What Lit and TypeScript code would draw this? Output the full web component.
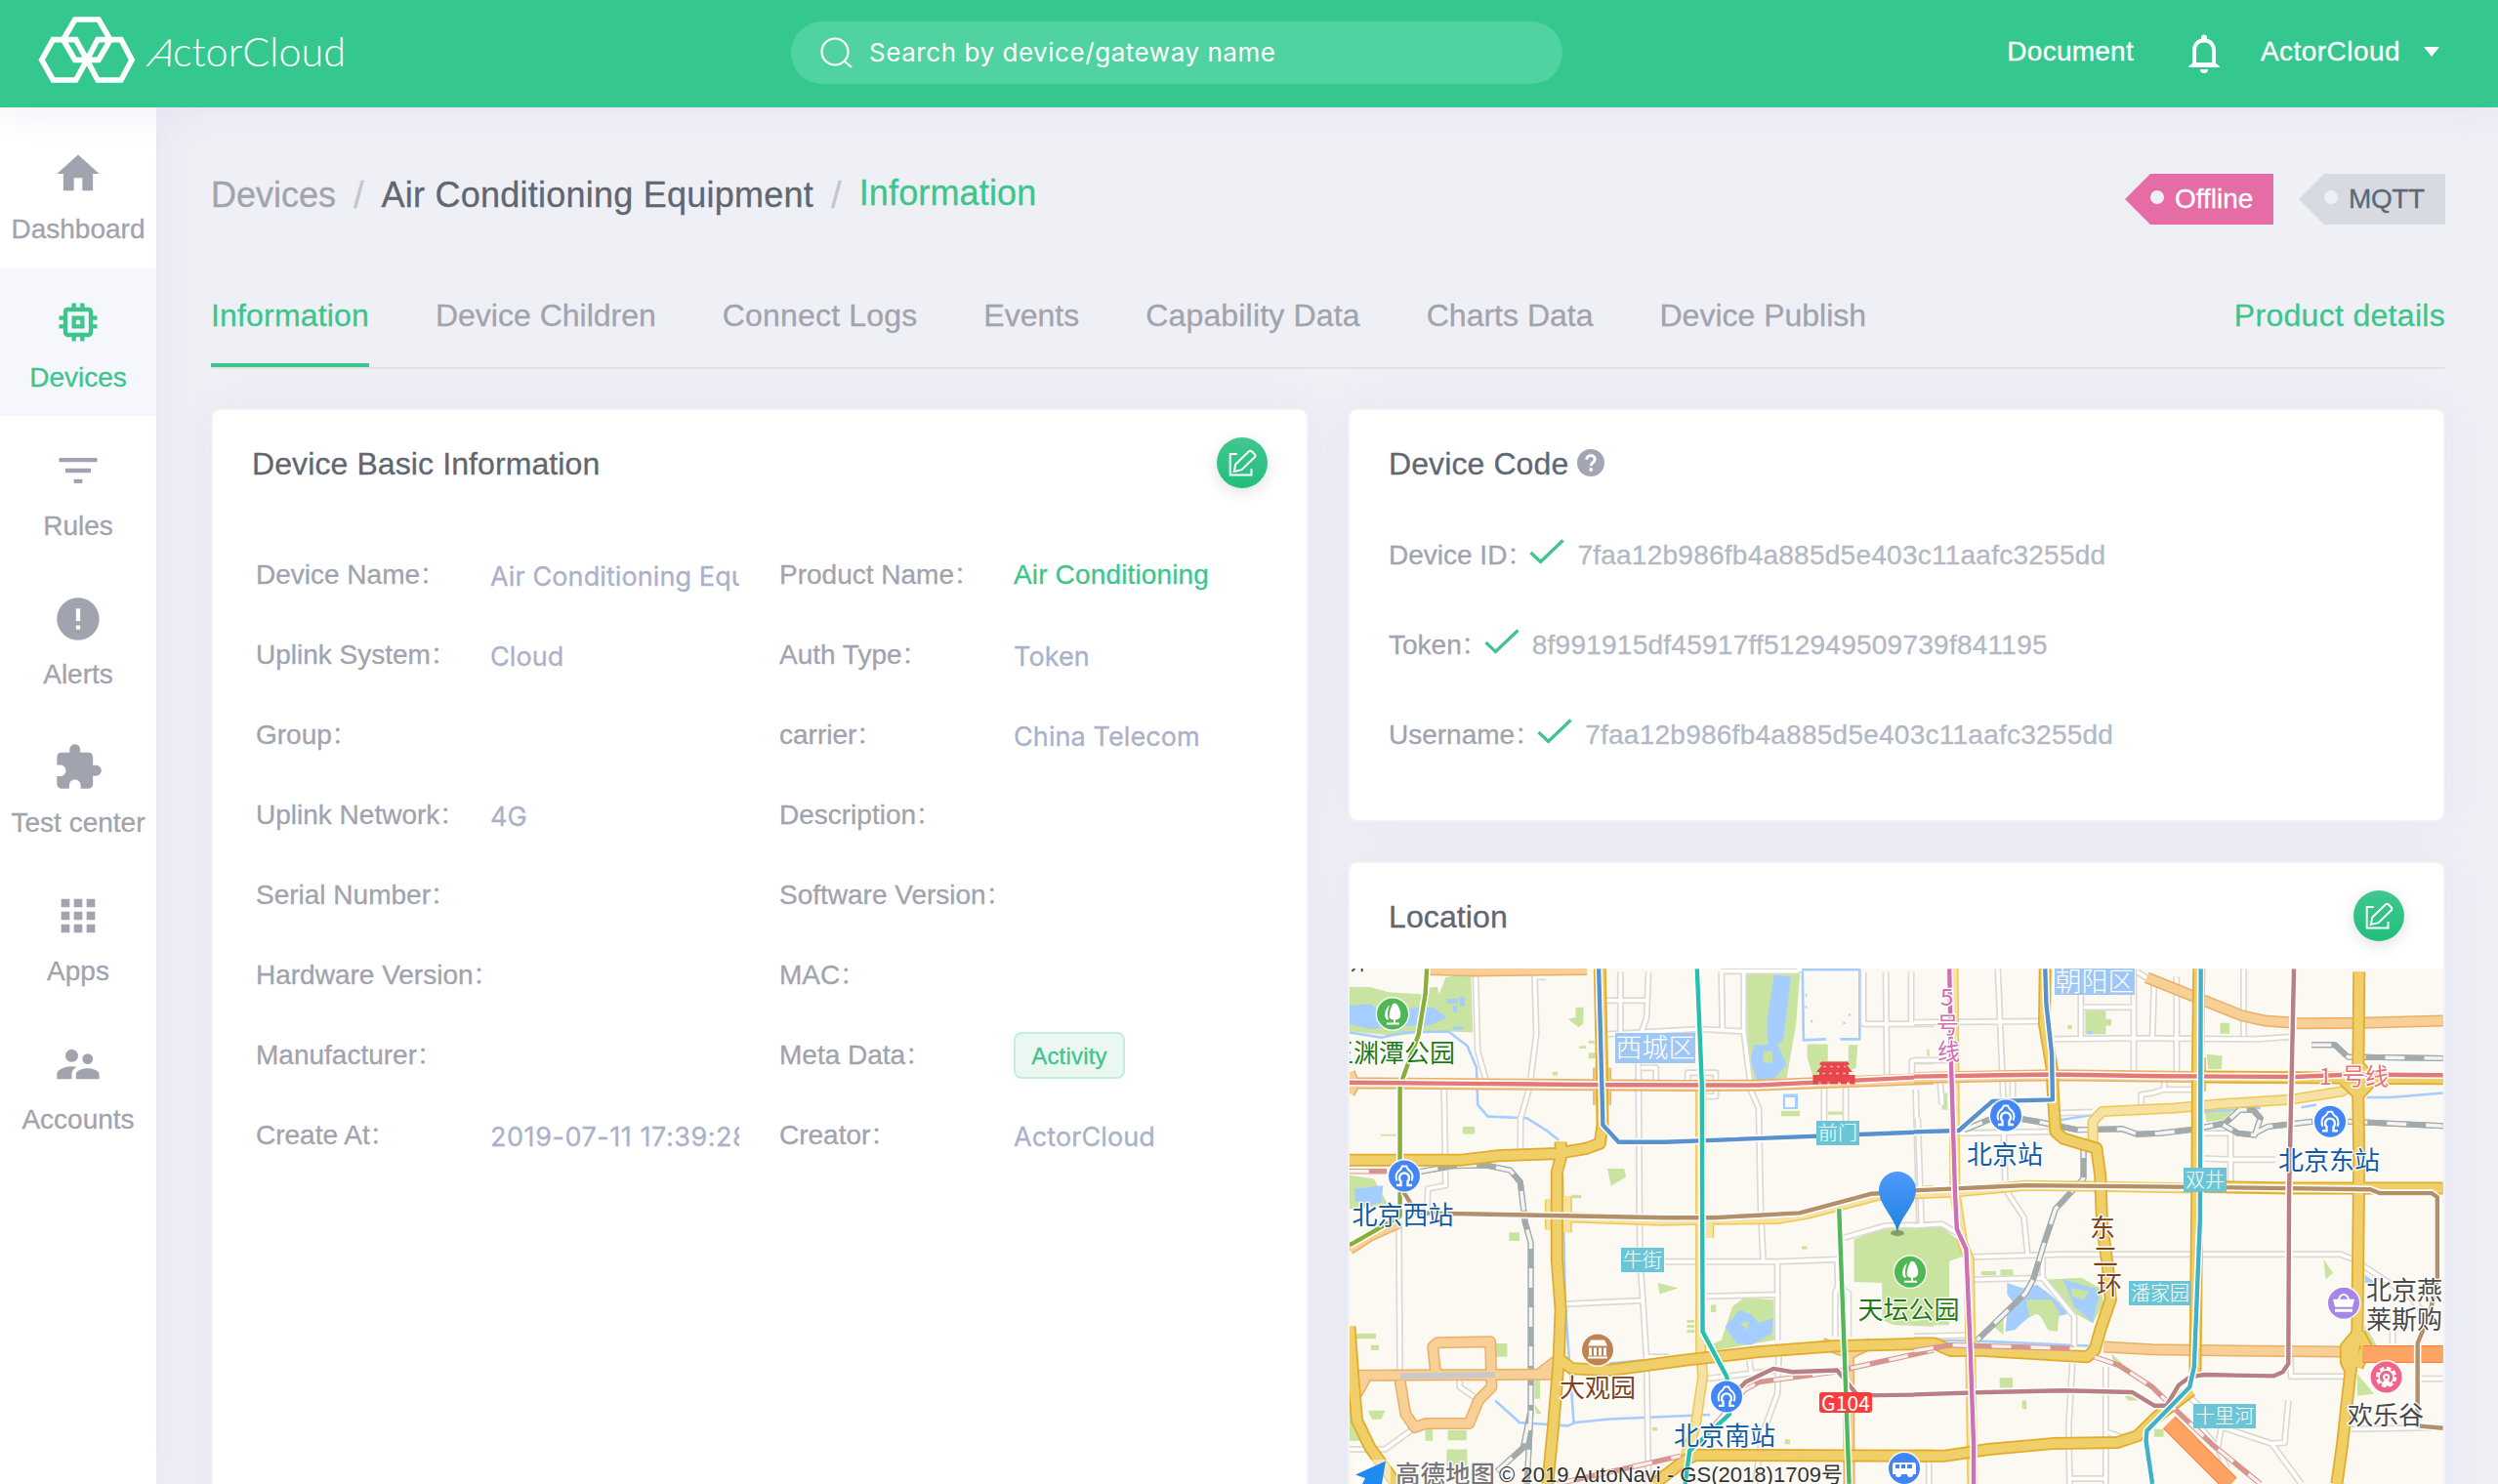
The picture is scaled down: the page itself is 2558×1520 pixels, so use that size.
import { LitElement, html, svg, css } from "lit";
import { customElement, property } from "lit/decorators.js";
import { classMap } from "lit/directives/class-map.js";

const ICONS: Record<string, unknown> = {
  home: svg`<path d="M10 20v-6h4v6h5v-8h3L12 3 2 12h3v8z"/>`,
  chip: svg`<path d="M15 9H9v6h6V9zm-2 4h-2v-2h2v2zm8-2V9h-2V7c0-1.1-.9-2-2-2h-2V3h-2v2h-2V3H9v2H7c-1.1 0-2 .9-2 2v2H3v2h2v2H3v2h2v2c0 1.1.9 2 2 2h2v2h2v-2h2v2h2v-2h2c1.1 0 2-.9 2-2v-2h2v-2h-2v-2h2zm-4 6H7V7h10v10z"/>`,
  filter: svg`<path d="M10 18h4v-2h-4v2zM3 6v2h18V6H3zm3 7h12v-2H6v2z"/>`,
  alert: svg`<path d="M12 2C6.48 2 2 6.48 2 12s4.48 10 10 10 10-4.48 10-10S17.52 2 12 2zm1 15h-2v-2h2v2zm0-4h-2V7h2v6z"/>`,
  puzzle: svg`<path d="M20.5 11H19V7c0-1.1-.9-2-2-2h-4V3.5a2.5 2.5 0 0 0-5 0V5H4c-1.1 0-1.99.9-1.99 2v3.8H3.5c1.49 0 2.7 1.21 2.7 2.7s-1.21 2.7-2.7 2.7H2V20c0 1.1.9 2 2 2h3.8v-1.5c0-1.49 1.21-2.7 2.7-2.7s2.7 1.21 2.7 2.7V22H17c1.1 0 2-.9 2-2v-4h1.5a2.5 2.5 0 0 0 0-5z"/>`,
  grid: svg`<path d="M4 8h4V4H4v4zm6 12h4v-4h-4v4zm-6 0h4v-4H4v4zm0-6h4v-4H4v4zm6 0h4v-4h-4v4zm6-10v4h4V4h-4zm-6 4h4V4h-4v4zm6 6h4v-4h-4v4zm0 6h4v-4h-4v4z"/>`,
  people: svg`<path d="M16.5 12a2.5 2.5 0 1 0 0-5 2.5 2.5 0 0 0 0 5zM9 11a3 3 0 1 0 0-6 3 3 0 0 0 0 6zm7.5 3c-1.83 0-5.5.92-5.500 2.750V19h11v-2.250c0-1.830-3.670-2.750-5.500-2.750zM9 13c-2.330 0-7 1.170-7 3.500V19h7v-2.250c0-.85.330-2.340 2.370-3.470C10.500 13.100 9.660 13 9 13z"/>`,
};

const NAV = [
  ["home", "Dashboard"],
  ["chip", "Devices"],
  ["filter", "Rules"],
  ["alert", "Alerts"],
  ["puzzle", "Test center"],
  ["grid", "Apps"],
  ["people", "Accounts"],
];

const TABS = ["Information", "Device Children", "Connect Logs", "Events", "Capability Data", "Charts Data", "Device Publish"];
const WIDE_TABS = new Set(["Information", "Connect Logs", "Capability Data"]);

type Field = { label: string; value?: string; kind?: "link" | "tag" | "date" };

const FIELDS: Field[] = [
  { label: "Device Name", value: "Air Conditioning Equipment" },
  { label: "Product Name", value: "Air Conditioning", kind: "link" },
  { label: "Uplink System", value: "Cloud" },
  { label: "Auth Type", value: "Token" },
  { label: "Group" },
  { label: "carrier", value: "China Telecom" },
  { label: "Uplink Network", value: "4G" },
  { label: "Description" },
  { label: "Serial Number" },
  { label: "Software Version" },
  { label: "Hardware Version" },
  { label: "MAC" },
  { label: "Manufacturer" },
  { label: "Meta Data", value: "Activity", kind: "tag" },
  { label: "Create At", value: "2019-07-11 17:39:28", kind: "date" },
  { label: "Creator", value: "ActorCloud" },
];

const CODES = [
  ["Device ID", "7faa12b986fb4a885d5e403c11aafc3255dd"],
  ["Token", "8f991915df45917ff512949509739f841195"],
  ["Username", "7faa12b986fb4a885d5e403c11aafc3255dd"],
];

/* ---------- map data: two survey tiles, west and east ---------- */

type Tile = {
  matrix: string;
  green: string;
  water: string;
  island: string;
  river: string;
  minor: string;
  pale: string;
  orange: string;
  yellow: string;
  express: string;
  rail: string;
  redRail: string;
  metro: [string, string][];
};

const WEST: Tile = {
  matrix: "matrix(.3827 0 0 .34435 -2 -12)",
  green:
    "M5 90H60L110 105 200 112 205 92 240 90 245 110 262 62 290 55 330 45 335 225 270 222 200 225 130 235 5 222ZM590 186 610 180V150H632L630 200 618 210ZM620 265h18v8h-18zM645 250h15v8h-15zM645 285h18v18h-18zM548 343h14v10h-14zM695 630H740L745 655 705 682ZM308 505h32v22h-32zM432 820h28v25h-28zM830 970 885 985 835 1003ZM5 650 70 660 90 700 110 740 5 750ZM1068 50H1210L1200 200 1175 360 1085 368 1070 250ZM1230 260H1285V310H1340V262H1365L1360 330 1250 375 1230 300ZM1160 458h50v16h-50zM1285 460h40v10h-40zM1355 840 1450 803H1568V1100L1460 1095 1430 1080V970L1355 967ZM960 1160 1000 1140 1030 1040 1060 1015 1140 1020 1142 1140 1040 1160 975 1172ZM972 1035h14v22h-14zM908 1080h20v8h-20zM908 1095h20v8h-20zM908 1110h20v8h-20zM18 1120h58v16h-58zM62 1155h22v15h-22zM395 1150h32v40h-32zM500 1260h15v55h-15zM500 1330l20 30h-15zM265 1465h55v50h-55zM208 1405h20v35h-20zM268 1408h50v30h-50zM55 1350h45l-10 26h-25zM88 528h42v5h-42zM815 1400h14v10h-14zM1170 1435h14v15h-14zM5 1310 20 1400 40 1440 5 1440ZM1215 860h14v10h-14zM600 708h25v10h-25z",
  water:
    "M5 145 60 140 90 165 190 150H230L265 180 220 205H160L60 215 5 200ZM265 125h30v14h-30zM300 118h14v30h-14zM282 145h10v20h-10zM282 208h26v8h-26zM18 690 95 680 90 730 50 742 20 725ZM1142 52 1186 60 1165 250 1150 262 1175 320 1140 365H1095L1078 310 1088 262 1125 262 1122 190ZM1165 408h40v45h-40zM1010 1100 1050 1050 1080 1065 1100 1090 1138 1075 1135 1120 1080 1155 1040 1150ZM1225 110h4v8h-4zM1225 145h4v8h-4zM1240 188h4v8h-4zM1340 170h6v6h-6zM1325 195h8v5h-8z",
  island: "M1112 280h25v35h-25zM1050 1090 1075 1085 1070 1110Z",
  river:
    "M5 225 90 240 150 225 270 222 320 265 345 330 348 440 375 475 480 480 530 515 565 545M1280 245 1220 248 1217 38H1370V245H1318M455 1385 590 1395 610 1385 700 1375 970 1362M575 650 582 1030 605 1385M395 1320 460 1385M700 1210 790 1200",
  minor:
    "M342 45 348 280 370 365M500 45 505 230 490 360M485 395 463 480 462 575M258 390 262 680 215 690 212 760M137 790 140 1230M690 130H800M730 45V230M805 45 800 180 785 230 778 300 782 900 790 1020 800 1200 805 1568M695 230 945 215 1060 222M1000 45 1003 215M1060 222V45M1060 222 1080 400 1100 450 1105 740 1112 905M1000 43H1200L1215 36M785 330H825V370M910 365V345H985V415H960M1380 45V200H1568M1440 45 1443 350M1508 45V200M1510 360V310H1568M1275 390V490M1333 390V490M1520 395 1530 800M1330 835 1440 800 1568 797M580 1033 790 1022M850 907H1150L1310 900M960 1010 1150 1005M1150 908V1140M1310 900 1312 980 1305 1000V1130M1312 980 1340 1000V1130M1155 1150 1150 1300 1110 1420 1090 1568M800 1190H860M960 1255 1150 1230M1075 1200 1080 1240M5 1465H100L180 1400M300 1260V1280L340 1310M500 60H530",
  pale: "M590 775 840 785 945 782 1150 780 1230 765 1420 710 1568 695M945 390V1170L950 1250 930 1400 900 1500M966 790V835M542 722V812M586 712V820",
  orange:
    "M5 375 500 380 900 383 1100 382 1568 362M672 330V440M690 330V440M215 38 345 42 640 38M25 1245 560 1242M235 1235 228 1160 240 1148 382 1145 385 1280 350 1320 325 1388 210 1388 180 1400 155 1360 140 1260M25 1300 50 1250M1340 1140 1342 1568M5 870 60 830 140 790M1270 1150 1345 1180 1400 1150M510 1242 560 1200M5 345 15 370M5 405 15 385",
  yellow:
    "M5 605H300L400 592 560 585 640 570 675 555 682 500 680 300 675 36M570 550V600L560 640V900L570 1050 565 1200 550 1400 535 1568M565 1195 600 1225 700 1230 900 1200 1100 1175 1300 1158 1568 1150M5 1100 15 1250 25 1380 60 1460 130 1568M820 1568 900 1500 930 1482 1568 1485",
  express: "",
  rail: "M190 640 280 622 370 620 435 635 462 670 475 790 490 850V1350L470 1460 400 1530M490 1350 480 1568",
  redRail: "M5 638H105M910 1480 1000 1370 1060 1290 1100 1265 1300 1235 1568 1170M560 1568 890 1485",
  metro: [
    ["#8aae38", "M212 36 208 110 190 230 140 385V772L5 858"],
    ["#e27a7c", "M5 374 700 381 1100 382 1568 356"],
    ["#5891cd", "M672 36 683 500 725 551H850L1568 520"],
    ["#b38f6a", "M150 700 185 762 850 776H980L1210 762 1400 705 1568 695"],
    ["#b97f83", "M1015 1320 1065 1265 1140 1225 1190 1235 1310 1230 1365 1305 1568 1302"],
    ["#27bfae", "M935 36 948 380 950 1115 1015 1250 1022 1360 915 1470 903 1568"],
    ["#50b859", "M1315 750 1330 1200 1342 1568"],
  ],
};

const EAST: Tile = {
  matrix: "matrix(.3814 0 0 .34435 578 -12)",
  green:
    "M460 160h55v25h15v20h-15v25h-55zM412 203h12v12h-12zM822 197h25v32h-25zM785 290 828 295 825 335 790 335ZM0 803H75L120 845 135 890 95 905V1095L0 1098ZM360 960 450 955 500 985 510 1030 480 1090 430 1060 370 990ZM215 1100 240 1075V1125ZM780 460 860 455 830 485 785 492ZM230 1252h35v30h-35zM645 1405h25v23h-25zM155 513H310V520H150ZM75 405h15v50h-15zM1100 900 1125 940 1105 960ZM1210 1095 1245 1160 1210 1150ZM1190 1240 1235 1300 1190 1305ZM530 1180 560 1210H535ZM232 930h34v18h-34zM180 935h40v12h-40zM565 1305h40v15h-30zM290 1320h12v25h-12zM35 275h6v20h-6z",
  water:
    "M250 970 290 985 330 975 360 1000 420 1060 350 1080 330 1060 305 1075 270 1110 245 1115 250 1060 275 1040 250 1005ZM400 960 500 990 480 1090 430 1040ZM1210 945 1240 970H1210ZM465 222h15v8h-15z",
  island: "M300 1020 370 1020 390 1060 385 1115 360 1110 335 1060 310 1070ZM420 985 470 995 455 1020 425 1010Z",
  river: "M1215 418H1280L1420 405M395 485 550 458M0 1140 150 1142 480 1158M1040 448 1080 440M780 460 930 450",
  minor:
    "M0 195 345 192M225 36 240 430M240 500 245 665M0 308H95M0 800 75 795 120 825M375 245 590 242 920 245 1010 238M448 36V240M455 150H590M590 36V340M645 60 640 240M705 60V360M885 36V235M610 440V410L640 405 670 395H750M672 360V395M390 465 480 462M125 525 370 520M780 600 850 603H970M850 525V670M780 525H855M10 480 20 800M250 700 295 775 305 885M150 893 400 885H1145L1180 900 1330 1010 1370 1060M155 960 345 955 430 1070V1160M345 890V955M0 1130 150 1125M425 1210 415 1400 418 1568M515 1220V1568M420 1552H515M520 1415 590 1440M1010 1160 1012 1248H1155M730 1300 800 1370 830 1400 960 1448 1040 1568M1005 1320 995 1445 960 1448M770 1400 815 1460 840 1520M825 1400 815 1460M1170 1405 1420 1400M1360 1255H1420M1285 1060V1150M1220 1095H1330M70 370 75 440M265 370V420M40 1500V1568M600 45 640 75",
  pale:
    "M480 560V490L505 460 700 450 830 437 1010 425 1150 400 1190 370M105 36 107 300 110 700 130 850 148 900 157 1568M0 705 110 700 300 680 500 683 750 688",
  orange:
    "M0 360 375 352 750 357M625 62 880 175 940 190 1040 198 1200 197 1420 190M510 1160 640 1168 860 1172 1145 1175M372 330V390M768 300V400",
  yellow:
    "M352 36 350 200 370 330 375 440 380 520 400 540 490 570 500 650 505 800 520 920 528 1020 500 1110 485 1170 465 1190 165 1170 100 1172 55 1150H0M0 1485H80L200 1465 370 1448 545 1445 600 1425 650 1370 745 1290M765 36 762 300 760 700 755 1240M1195 45 1192 400 1195 600 1190 1110 1170 1250 1150 1450 1135 1568M780 357 1420 362M780 684 1005 688 1420 688M1195 1115 1160 1160V1205L1175 1240M1195 1120 1215 1160 1190 1220M1192 320 1228 370 1192 412M1192 325 1158 372 1192 408",
  express: "M1205 1182H1420M685 1385 850 1568",
  rail: "M135 515 200 485 250 475 330 490 440 515 560 512 600 528 660 525 740 515 835 495 875 455H910L930 480 915 530 870 525 830 500M915 525 950 505 1070 490M1165 490 1420 503M1068 262H1130L1165 298 1420 302M455 540V660L380 750 350 850 320 960 300 1000 170 1140",
  redRail: "M0 1172 100 1155 430 1165M485 1190 550 1215 640 1280 700 1345 800 1450 930 1568",
  metro: [
    ["#e27a7c", "M0 356 370 350 660 355 1020 357 1180 350 1420 352"],
    ["#b38f6a", "M0 695 100 690 300 680 760 685 1225 692 1250 703H1390L1405 715V960L1385 1060 1352 1150V1395L1420 1402"],
    ["#5891cd", "M0 521 120 517 210 430 372 425 370 290 355 140 352 36"],
    ["#b97f83", "M0 1302 200 1295 400 1290 585 1295 645 1335H678L710 1275 740 1250 780 1243 965 1247 990 1235 1005 1210 1007 700 1012 450 1020 36"],
    ["#ce70b4", "M95 36 100 330 110 700 115 810 140 870 150 1130 160 1450V1568"],
    ["#42b0c8", "M770 36 768 780 752 1220 740 1280 625 1410 623 1440 640 1568"],
  ],
};

const GREEN = "#1f7a16";
const BLUE = "#0f5ba8";
const BROWN = "#7a431c";
const DARK = "#4a4a4a";

const LABELS: [number, number, string, string, number][] = [
  [-8, 1, "桥", DARK, 26],
  [-22, 96, "玉渊潭公园", GREEN, 26],
  [2.500, 262, "北京西站", BLUE, 26],
  [520.500, 359, "天坛公园", GREEN, 26],
  [215, 439, "大观园", BROWN, 26],
  [332, 488, "北京南站", BLUE, 26],
  [632, 200, "北京站", BLUE, 26],
  [951, 206, "北京东站", BLUE, 26],
  [1041, 339, "北京燕", DARK, 26],
  [1041, 369, "莱斯购物", DARK, 26],
  [1022, 467, "欢乐谷", DARK, 26],
  [758, 275, "东", BROWN, 26],
  [761, 304, "二", BROWN, 26],
  [765, 334, "环", BROWN, 26],
  [605, 38, "5", "#cf6fb0", 24],
  [601, 66, "号", "#cf6fb0", 23],
  [602, 93, "线", "#cf6fb0", 23],
  [993, 119, "1", "#e57373", 23],
  [1016, 119, "号线", "#e57373", 24],
];

const PLATES: [number, number, number, number, string, string, number][] = [
  [272, 66, 82, 31, "西城区", "#9fc7f3", 27],
  [722, -1, 82, 28, "朝阳区", "#9fc7f3", 27],
  [478, 156, 44, 25, "前门", "#6ac6d6", 20],
  [278, 286, 44, 25, "牛街", "#6ac6d6", 20],
  [854, 204, 44, 25, "双井", "#6ac6d6", 20],
  [798, 320, 64, 25, "潘家园", "#6ac6d6", 20],
  [864, 446, 64, 25, "十里河", "#6ac6d6", 20],
];

const GLYPHS: Record<string, [string, unknown]> = {
  tree: ["#4fb855", svg`<path fill="#fff" d="M2-11C5-11 7-6 8-2 9 3 7 6 3 6V9H7V11H-6V9H1V6C-3 6-4 3-3-1-2-6 0-11 2-11ZM-3-9C-7-6-9 0-7 5-6 6-4 6-4 6-6 1-5-4-3-9Z"/>`],
  station: ["#4286f5", svg`<path fill="none" stroke="#fff" stroke-width="2.400" d="M-8 9.500H-3.500V5.500A5 5 0 1 1 3.500 5.500V9.500H8"/><path fill="none" stroke="#fff" stroke-width="2" d="M-7.500 5A8.500 8.500 0 0 1-4-6.500L-2-10H2L4-6.500A8.500 8.500 0 0 1 7.500 5"/>`],
  museum: ["#c08452", svg`<path fill="#fff" d="M-7-10H7L10-4H-10ZM-9-2H-6V6H-9ZM-4-2H-1V6H-4ZM1-2H4V6H1ZM6-2H9V6H6ZM-10 7H10V9H-10Z"/>`],
  shop: ["#a687e8", svg`<path fill="none" stroke="#fff" stroke-width="2" d="M-5-2C-5-11 5-11 5-2"/><path fill="#fff" d="M-11-4H11L9 4H-9ZM-9 6H9V9H-9Z"/>`],
  wheel: ["#f0648c", svg`<circle r="9" fill="none" stroke="#fff" stroke-width="3.500" stroke-dasharray="4.500 2.570"/><circle r="7.500" fill="none" stroke="#fff" stroke-width="1.500"/><path fill="#fff" d="M-5 9-1 0H1L5 9Z"/><circle r="3.500" fill="#fff"/><circle r="1.500" fill="#f0648c"/>`],
  bus: ["#4286f5", svg`<path fill="#fff" d="M-10-6H10Q12-6 12-3V6H9A3 3 0 0 1 3 6H-3A3 3 0 0 1-9 6H-12V-3Q-12-6-10-6Z"/><path fill="#4286f5" d="M-9-4H-5V0H-9ZM-3-4H1V0H-3ZM3-4H8V0H3Z"/>`],
};

const PINS: [string, number, number][] = [
  ["tree", 44, 46.5],
  ["station", 56, 212.5],
  ["tree", 574, 310.7],
  ["museum", 254, 390.5],
  ["station", 386, 438.4],
  ["station", 672, 150.5],
  ["station", 1004, 156.7],
  ["shop", 1018, 342.7],
  ["wheel", 1061.6, 418.4],
  ["bus", 568, 512],
];

@customElement("city-map")
class CityMap extends LitElement {
  static styles = css`
    :host { display: block; width: 1120px; height: 528px; }
    svg { display: block; }
    .line path { fill: none; vector-effect: non-scaling-stroke; stroke-linejoin: round; }
    .line .park { fill: #c9e3a0; }
    .line .lake { fill: #a5cdff; }
    .cjk { font-family: "Noto Sans CJK SC", "Liberation Sans", sans-serif; }
    .halo { paint-order: stroke; stroke: #fff; stroke-width: 2.6px; stroke-linejoin: round; }
    .soft { paint-order: stroke; stroke: rgba(255, 255, 255, 0.6); stroke-width: 1.5px; }
    .latin { font-family: "Liberation Sans", "Noto Sans CJK SC", sans-serif; }
  `;

  private tile(t: Tile) {
    const road = (d: string, casing: string, cw: number, fill: string, fw: number) => svg`
      <path d=${d} stroke=${casing} stroke-width=${cw}></path>
      <path d=${d} stroke=${fill} stroke-width=${fw}></path>`;
    return svg`<g class="line" transform=${t.matrix}>
      <path class="park" d=${t.green}></path><path class="lake" d=${t.water}></path><path class="park" d=${t.island}></path>
      <path d=${t.river} stroke="#a5cdff" stroke-width="2.600"></path>
      ${road(t.minor, "#ded9d0", 7, "#ffffff", 3.6)}
      ${road(t.rail, "#a3aaac", 6, "#a3aaac", 6)}
      <path d=${t.rail} stroke="#f4f4f2" stroke-width="3.600" stroke-dasharray="20 20"></path>
      ${road(t.pale, "#efc850", 11, "#f6e2a4", 8)}
      ${road(t.orange, "#e8b066", 12, "#f8cf96", 9)}
      ${road(t.yellow, "#e0ac2c", 13, "#f0cf68", 9.5)}
      ${t.express ? road(t.express, "#f78236", 18, "#fda364", 16) : ""}
      <path d=${t.redRail} stroke="#d79590" stroke-width="5.500"></path>
      <path d=${t.redRail} stroke="#faf0ec" stroke-width="3.400" stroke-dasharray="20 20"></path>
      ${t.metro.map(([c, d]) => road(d, "#ffffff", 7.5, c, 4.4))}
    </g>`;
  }

  render() {
    return html`<svg width="1120" height="528" viewBox="0 0 1120 528">
      <defs>
        <linearGradient id="drop" x1="0" y1="0" x2="0" y2="1">
          <stop offset="0" stop-color="#5098ff"></stop><stop offset="1" stop-color="#1e84dc"></stop>
        </linearGradient>
      </defs>
      <rect width="1120" height="528" fill="#fcf9f2"></rect>
      ${this.tile(WEST)} ${this.tile(EAST)}
      <rect x="446" y="132" width="10" height="10" fill="#fcf9f2"></rect>
      <path d="M52 417.500 149 416" stroke="#c9c9c9" stroke-width="6"></path>
      <path fill="#e8474b" d="M483 95.500H510L512 98 509.500 99.500 515 106H511V109H517.500V118.500H512V115.500H509V118.500H503V115.500H500V118.500H492V115.500H489V118.500H483V115.500H480V118.500H474.500V109H481V106H478L483.500 99.500 481 98Z"></path>
      <path d="M484 107.500H509M485 100.500H508" stroke="#fff" stroke-opacity=".55" stroke-width="1.300" stroke-dasharray="3 4"></path>
      ${PLATES.map(([x, y, w, h, t, c, s]) => svg`
        <rect x=${x} y=${y} width=${w} height=${h} fill=${c}></rect>
        <text class="cjk" x=${x + w / 2} y=${y + h / 2 + s * 0.37} font-size=${s} font-weight="300" text-anchor="middle" fill="#fff">${t}</text>`)}
      ${LABELS.map(([x, y, t, c, s]) => svg`<text class="cjk halo" x=${x} y=${y} font-size=${s} fill=${c}>${t}</text>`)}
      <rect x="481" y="434" width="54" height="21" rx="3" fill="#fa3c3c"></rect>
      <text class="cjk" x="508" y="452.500" font-size="21" text-anchor="middle" textLength="50" fill="#fff">G104</text>
      ${PINS.map(([k, x, y]) => svg`<g transform="translate(${x} ${y})">
        <circle r="17.500" fill="#fff" opacity=".85"></circle><circle r="16" fill=${GLYPHS[k][0]}></circle>${GLYPHS[k][1]}</g>`)}
      <ellipse cx="561" cy="271" rx="7" ry="3" fill="#7b8a5a" opacity=".8"></ellipse>
      <path fill="url(#drop)" d="M561 271C559 255 542 243 542 227A19 19 0 0 1 580 227C580 243 563 255 561 271Z"></path>
      <path fill="#fff" opacity=".5" d="M5 503H42V528H5Z"></path>
      <path fill="#1d8bf0" d="M37 504.500 6 518.500 16 522 13 528H33Z"></path>
      <text class="cjk halo" x="47" y="526.500" font-size="25.500" font-weight="500" fill="#777">高德地图</text>
      <text class="latin soft" x="153" y="525.500" font-size="22" textLength="352" lengthAdjust="spacingAndGlyphs" fill="#333">© 2019 AutoNavi - GS(2018)1709号</text>
    </svg>`;
  }
}

@customElement("edit-button")
class EditButton extends LitElement {
  static styles = css`
    :host {
      display: block; width: 52px; height: 52px; border-radius: 50%;
      background: linear-gradient(#40c78f, #22bf7b);
      box-shadow: 0 4px 16px rgba(0, 0, 0, 0.12);
    }
    svg { display: block; fill: none; stroke: #fff; stroke-width: 2; }
  `;
  render() {
    return html`<svg width="52" height="52" viewBox="0 0 52 52">
      <path d="M20.700 17H13.700V38.500H35.500V32"></path>
      <path d="M17.700 35 19.300 27.500 33 14.200Q34.300 13.200 35.600 14.200L39 17.500Q40 18.800 39 20L25.500 33.200Z"></path>
    </svg>`;
  }
}

@customElement("info-card")
class InfoCard extends LitElement {
  @property() heading = "";
  @property({ type: Boolean }) editable = false;
  @property({ type: Boolean }) help = false;
  static styles = css`
    :host {
      display: block; box-sizing: border-box; border: 2px solid #f1f2f8; border-radius: 10px;
      background: #fff; background-clip: padding-box; overflow: hidden;
      box-shadow: 0 0 40px rgba(205, 205, 232, 0.32);
    }
    .head { display: flex; align-items: center; height: 108px; padding: 0 40px; color: #606672; font-size: 32px; line-height: 40px; letter-spacing: 0.1px; }
    .head span { padding-top: 1px; }
    .spacer { flex: 1; }
    .help { margin-left: 9px; display: block; }
  `;
  render() {
    return html`<div class="head"><span>${this.heading}</span>
      ${this.help
        ? html`<svg class="help" width="28" height="28" viewBox="0 0 28 28"><circle cx="14" cy="14" r="14" fill="#a3a5b2"></circle>
            <path d="M9.800 10.800C9.800 5.200 18.200 5.400 18.200 10.400 18.200 13.600 14.200 13.600 14.200 17.200" fill="none" stroke="#fff" stroke-width="3"></path><circle cx="14.200" cy="21" r="1.900" fill="#fff"></circle></svg>`
        : ""}
      <span class="spacer"></span>${this.editable ? html`<edit-button></edit-button>` : ""}</div><slot></slot>`;
  }
}

@customElement("app-root")
class AppRoot extends LitElement {
  static styles = css`
    :host {
      display: flex; flex-direction: column; width: 2558px; height: 1520px; overflow: hidden;
      background: #eff0f6; color: #a1a3ae;
      font-family: "Liberation Sans", Arial, "Noto Sans CJK SC", sans-serif; font-size: 28px;
      -webkit-text-stroke: 0.3px;
    }
    .top { flex: none; display: grid; grid-template-columns: 771px 790px 1fr; align-items: center; height: 110px; padding: 0 60px 0 39px; box-sizing: border-box; background: #34c88f; color: #fff; box-shadow: 0 0 40px rgba(205, 205, 232, 0.42); z-index: 2; }
    .brand { display: block; -webkit-text-stroke: 0; }
    .brand text { font-family: Lato, "Open Sans", sans-serif; font-weight: 300; }
    .search { display: flex; align-items: center; gap: 15px; height: 64px; margin-bottom: 2px; padding-left: 29px; box-sizing: border-box; border-radius: 32px; background: #51d2a1; }
    .search span { font-family: Inter, sans-serif; font-size: 26px; letter-spacing: 0.55px; line-height: 66px; -webkit-text-stroke: 0; }
    .account { display: flex; align-items: center; justify-content: flex-end; line-height: 64px; padding-bottom: 5px; }
    .doc { letter-spacing: 0.25px; }
    .user { letter-spacing: 0.45px; }
    .bell { margin: 4px 42px 0 56px; }
    .caret { margin: 0 0 0 24px; border: solid transparent; border-width: 10px 8.5px 0; border-top-color: #fff; }
    .body { flex: 1; display: flex; min-height: 0; }
    .side { flex: none; width: 160px; padding-top: 12px; box-sizing: border-box; background: #fff; box-shadow: 0 0 40px rgba(205, 205, 232, 0.36); }
    .item { display: flex; flex-direction: column; align-items: center; height: 152px; padding-top: 30px; box-sizing: border-box; fill: #a1a3ae; white-space: nowrap; }
    .item svg { width: 52px; height: 52px; }
    .item span { margin-top: 15px; line-height: 32px; }
    .item.on { background: #f5f7fc; color: #3ec58b; fill: #3ec58b; }
    .main { flex: 1; display: flex; flex-direction: column; min-width: 0; padding: 60px 54px 0 56px; }
    .crumbs { flex: none; display: flex; align-items: center; height: 60px; font-size: 36px; line-height: 60px; }
    .sep { margin: 0 18px 0 18px; color: #c1c6d0; font-size: 38px; }
    .device { color: #606672; letter-spacing: 0.24px; }
    .here { color: #3ec58b; margin-top: -4px; letter-spacing: 0.15px; }
    .badges { display: flex; gap: 26px; margin: 8px 0 0 auto; }
    .badge { display: flex; align-items: center; width: 152px; height: 52px; padding-left: 26px; box-sizing: border-box; font-size: 28px; line-height: 52px; color: #fff; background: #e66ca5; clip-path: polygon(0 50%, 26px 0, 100% 0, 100% 100%, 26px 100%); }
    .badge i { width: 14px; height: 14px; margin: -4px 11px 0 0; border-radius: 50%; background: #eff0f6; }
    .badge.grey { width: 150px; background: #d7dae1; color: #606672; }
    .badge.grey span { letter-spacing: -0.4px; }
    .tabs { flex: none; display: flex; gap: 68px; margin: 40px 0; border-bottom: 2px solid #e0e2e8; font-size: 32px; line-height: 106px; }
    .tab.wide { letter-spacing: 0.17px; }
    .tab.on { color: #3ec58b; box-shadow: inset 0 -4px #3ec58b; }
    .product { margin-left: auto; color: #3ec58b; letter-spacing: 0.3px; }
    .cards { display: grid; grid-template-columns: 1124px 1124px; gap: 40px; align-items: start; }
    .basic { height: 1300px; }
    .stack { display: flex; flex-direction: column; gap: 40px; }
    .code { height: 424px; }
    .place { height: 800px; }
    .fields { display: grid; grid-template-columns: 240px 255px 281px 1fr; grid-auto-rows: 82px; align-items: center; padding: 20px 0 0 44px; }
    .label { line-height: 82px; white-space: nowrap; }
    .label.second { margin-left: 41px; }
    .colon { font-size: 24px; vertical-align: 1px; -webkit-text-stroke: 0; }
    .value { margin-top: 4px; line-height: 60px; overflow: hidden; white-space: nowrap; color: #aab1c8; font-family: Inter, sans-serif; font-size: 27px; letter-spacing: 0.1px; }
    .value.date { letter-spacing: 0.55px; }
    .link { color: #3ec58b; letter-spacing: 0.15px; }
    .tag { justify-self: start; width: 114px; height: 48px; text-align: center; box-sizing: border-box; border: 2px solid #c5eddc; border-radius: 8px; background: #ebf8f2; color: #3ec58b; font-size: 24px; line-height: 45px; letter-spacing: 0.2px; }
    .codes { display: flex; flex-direction: column; gap: 46px; padding: 18px 0 0 40px; line-height: 46px; }
    .line { display: flex; align-items: center; }
    .line svg { margin: -9px 13px 0 -1px; }
    .hash { color: #b2b8c4; letter-spacing: 0.25px; }
  `;

  private field(f: Field, i: number) {
    const plain = !f.kind || f.kind === "date";
    return html`<div class=${classMap({ label: true, second: i % 2 === 1 })}>${f.label}<span class="colon">：</span></div>
      <div class=${classMap({ link: f.kind === "link", tag: f.kind === "tag", value: plain, date: f.kind === "date" })}>${f.value ?? ""}</div>`;
  }

  render() {
    return html`
      <header class="top">
        <svg class="brand" width="330" height="110" viewBox="39 0 330 110">
          <g fill="none" stroke="#fff" stroke-width="5.700">
            <path d="M76.700 20H101L113 40.700 101 61.300H76.700L64.700 40.700Z"></path>
            <path d="M42.700 61.300 54.300 40.700H77.700L89 61.300 77.700 82H54.300Z"></path>
            <path d="M89 61.300 100 40.700H124L135 61.300 124 82H100Z"></path>
          </g>
          <text font-size="39" transform="matrix(1 0 -.43 1 149 68)" fill="#fff">A</text>
          <text x="177" y="68" font-size="42" textLength="177" lengthAdjust="spacingAndGlyphs" fill="#fff">ctorCloud</text>
        </svg>
        <div class="search">
          <svg width="36" height="36" viewBox="0 0 36 36" fill="none" stroke="#fff" stroke-width="2.200"><circle cx="16" cy="17" r="13.500"></circle><path d="M25.500 26.500 33 33"></path></svg>
          <span>Search by device/gateway name</span>
        </div>
        <div class="account">
          <span class="doc">Document</span>
          <svg class="bell" width="32" height="40" viewBox="0 0 32 40"><path fill="none" stroke="#fff" stroke-width="4" d="M6 32V17.500C6 10 10 6.500 16 6.500S26 10 26 17.500V32"></path><path fill="#fff" d="M13 7V3.500A3 3 0 0 1 19 3.500V7ZM5 29H27L32 33V34H0V33ZM12 36H20A4 4 0 0 1 12 36Z"></path></svg>
          <span class="user">ActorCloud</span><i class="caret"></i>
        </div>
      </header>
      <div class="body">
        <nav class="side">
          ${NAV.map(([icon, name]) => html`<div class=${classMap({ item: true, on: name === "Devices" })}>
            <svg viewBox="0 0 24 24">${ICONS[icon]}</svg><span>${name}</span></div>`)}
        </nav>
        <main class="main">
          <div class="crumbs">
            <span>Devices</span><span class="sep">/</span><span class="device">Air Conditioning Equipment</span><span class="sep">/</span><span class="here">Information</span>
            <div class="badges">
              <div class="badge"><i></i><span>Offline</span></div>
              <div class="badge grey"><i></i><span>MQTT</span></div>
            </div>
          </div>
          <div class="tabs">
            ${TABS.map((t, i) => html`<span class=${classMap({ tab: true, on: i === 0, wide: WIDE_TABS.has(t) })}>${t}</span>`)}
            <span class="product">Product details</span>
          </div>
          <div class="cards">
            <info-card class="basic" heading="Device Basic Information" editable>
              <div class="fields">${FIELDS.map((f, i) => this.field(f, i))}</div>
            </info-card>
            <div class="stack">
              <info-card class="code" heading="Device Code" help>
                <div class="codes">
                  ${CODES.map(([k, v]) => html`<div class="line"><span>${k}<span class="colon">：</span></span>
                    <svg width="36" height="26" viewBox="0 0 36 26" fill="none" stroke="#3ec58b" stroke-width="3.200"><path d="M1.500 14 11.500 23.500 34.500 1.500"></path></svg>
                    <span class="hash">${v}</span></div>`)}
                </div>
              </info-card>
              <info-card class="place" heading="Location" editable><city-map></city-map></info-card>
            </div>
          </div>
        </main>
      </div>`;
  }
}
